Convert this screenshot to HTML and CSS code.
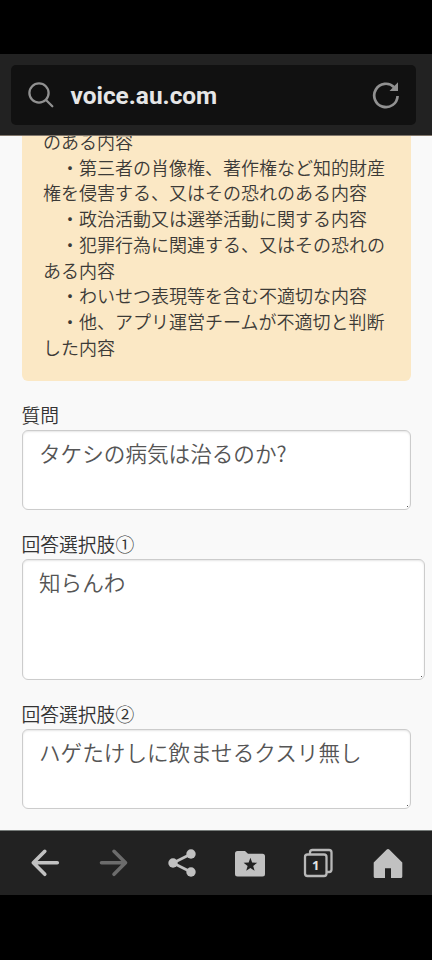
FILE: index.html
```
<!DOCTYPE html>
<html lang="ja">
<head>
<meta charset="utf-8">
<title>voice.au.com</title>
<link rel="stylesheet" href="styles.css">
</head>
<body>
<div class="status"></div>
<header class="toolbar">
  <div class="address">
    <svg class="search" viewBox="0 0 26 26"><circle cx="11" cy="11" r="9.6"/><path d="M18 18l6.300 6.300"/></svg>
    <span class="url">voice.au.com</span>
    <svg class="reload" viewBox="0 0 28 28"><path class="arc" d="M22.200 6.200A11.700 11.700 0 1 0 25.600 15"/><path class="tip" d="M26 1.300V10H17.500z"/></svg>
  </div>
</header>
<main class="page">
  <div class="notice">
    <p>のある内容<br>　・第三者の肖像権、著作権など知的財産<br>権を侵害する、又はその恐れのある内容<br>　・政治活動又は選挙活動に関する内容<br>　・犯罪行為に関連する、又はその恐れの<br>ある内容<br>　・わいせつ表現等を含む不適切な内容<br>　・他、アプリ運営チームが不適切と判断<br>した内容</p>
  </div>
  <section class="field"><div class="label">質問</div><div class="box">タケシの病気は治るのか?</div></section>
  <section class="field"><div class="label">回答選択肢①</div><div class="box large">知らんわ</div></section>
  <section class="field"><div class="label">回答選択肢②</div><div class="box">ハゲたけしに飲ませるクスリ無し</div></section>
</main>
<nav class="nav">
  <svg viewBox="0 0 36 36"><path class="line" d="M31.300 17.800H7.300M18.800 6.300L7.300 17.800l11.500 11.500"/></svg>
  <svg class="dim" viewBox="0 0 36 36"><path class="line" d="M6.500 17.800H30.500M19 6.300L30.500 17.800 19 29.300"/></svg>
  <svg viewBox="0 0 36 36"><path class="link" d="M27 9L9 18l18 9"/><circle cx="9" cy="18" r="4.700"/><circle cx="27" cy="9" r="4.700"/><circle cx="27" cy="27" r="4.700"/></svg>
  <svg viewBox="0 0 36 36"><path d="M5.500 6h7.500l3 2.800h14.500a2.500 2.500 0 0 1 2.500 2.500v17.700a2.500 2.500 0 0 1-2.500 2.500h-25A2.500 2.500 0 0 1 3 29V8.500A2.500 2.500 0 0 1 5.500 6z"/><path class="cut" d="M18.400 12.800l1.750 4.800 5.050.2-4 3.100 1.400 4.900-4.200-2.800-4.200 2.800 1.400-4.900-4-3.100 5.050-.2z"/></svg>
  <svg viewBox="0 0 36 36"><path class="frame" d="M9 9V7.500A2.500 2.500 0 0 1 11.500 5H28a2.500 2.500 0 0 1 2.500 2.500v17A2.500 2.500 0 0 1 28 27h-2"/><rect class="frame" x="4" y="9.500" width="21.500" height="21.500" rx="2.500"/><text x="14.700" y="25.300">1</text></svg>
  <svg viewBox="0 0 36 36"><path d="M3.700 17.500L16.500 4.700Q18 3.200 19.500 4.700L32.300 17.500V31.500a1.500 1.500 0 0 1-1.500 1.500H21V23.300H15V33H5.200a1.500 1.500 0 0 1-1.500-1.500z"/></svg>
</nav>
<div class="base"></div>
</body>
</html>
```
FILE: styles.css
```
* { box-sizing: border-box; }
body {
  margin: 0;
  width: 432px;
  height: 960px;
  display: flex;
  flex-direction: column;
  overflow: hidden;
  background: #000;
  font-family: "Noto Sans CJK JP", sans-serif;
  font-weight: 350;
}
.status { height: 54px; flex: none; }
.toolbar {
  height: 81px;
  flex: none;
  padding: 11px 16px 10px 11px;
  background: #222;
}
.address {
  height: 60px;
  display: flex;
  align-items: center;
  padding: 0 16px 0 17px;
  border-radius: 5px;
  background: #111;
}
.search { width: 26px; height: 26px; fill: none; stroke: #919191; stroke-width: 2.300; stroke-linecap: round; }
.url {
  flex: 1;
  margin-left: 16.500px;
  padding-top: 2px;
  color: #e6e6e6;
  font: 700 24.400px/30px Roboto, sans-serif;
}
.reload { width: 28px; height: 28px; }
.arc { fill: none; stroke: #919191; stroke-width: 2.700; }
.tip { fill: #919191; }
.page {
  height: 696px;
  flex: none;
  overflow: hidden;
  padding: 0 7px 0 21.500px;
  background: #f9f9f9;
  border-top: 1px solid #81776c;
  border-bottom: 1px solid #777c7a;
}
.notice {
  width: 389px;
  height: 245px;
  overflow: hidden;
  padding: 0 21.500px;
  border-radius: 0 0 6px 6px;
  background: #fbe8c5;
}
.notice p {
  margin: -7px 0 0;
  color: #3b3a37;
  font-size: 18px;
  line-height: 25.700px;
  white-space: nowrap;
}
.field { margin-top: 20px; }
.label { height: 29px; color: #333; font-size: 18.800px; line-height: 28px; }
.box {
  position: relative;
  width: 389px;
  height: 80px;
  padding: 7px 16.500px;
  border: 1.500px solid #ccc;
  border-radius: 6px;
  background: #fff;
  box-shadow: inset 0 1px 2px rgba(0,0,0,.1);
  color: #555;
  font-size: 21.600px;
  line-height: 29px;
  white-space: nowrap;
}
.large { width: 403px; height: 121px; }
.box::after {
  content: "";
  position: absolute;
  right: 2px;
  bottom: 2px;
  width: 1px;
  height: 1px;
  background: #555;
}
.nav {
  height: 64px;
  flex: none;
  display: flex;
  justify-content: space-between;
  align-items: center;
  padding: 0 26px;
  background: #222;
}
.nav svg { width: 36px; height: 36px; fill: #c1c1c1; }
.line { fill: none; stroke: #c1c1c1; stroke-width: 3.600; stroke-linecap: round; stroke-linejoin: round; }
.dim .line { stroke: #6c6c6c; }
.link { fill: none; stroke: #c1c1c1; stroke-width: 2.700; }
.nav .cut { fill: #222; }
.frame { fill: none; stroke: #b8b8b8; stroke-width: 2.300; }
.nav text { fill: #e4e4e4; font: bold 13px "Noto Sans", sans-serif; text-anchor: middle; }
.base { flex: 1; }
```
